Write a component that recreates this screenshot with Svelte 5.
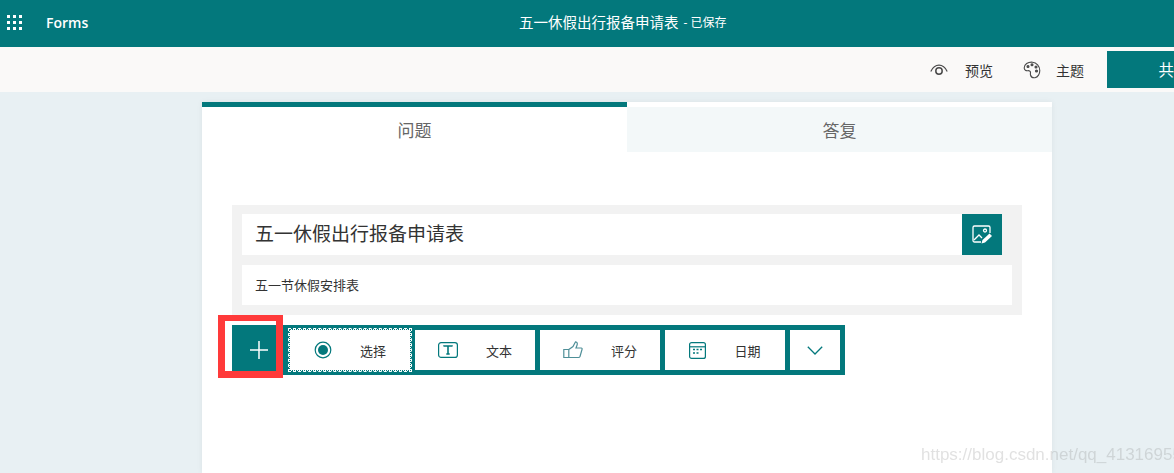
<script>
  const dots = Array(9).fill(0);
</script>

<div class="page">
  <header class="top">
    <div class="waffle">{#each dots as _}<i></i>{/each}</div>
    <span class="brand">Forms</span>
    <div class="doc"><span class="doc-title">五一休假出行报备申请表</span><span class="doc-state">- 已保存</span></div>
  </header>

  <div class="cmdbar">
    <button class="cmd cmd-preview">
      <svg width="18" height="12" viewBox="0 0 18 12" fill="none" stroke="#4a4a4a" stroke-width="1.2"><path d="M.8 7.5C3 3 6 1.2 9 1.2s6 1.8 8.200 6.300"/><circle cx="9" cy="7" r="3.200" stroke-width="1.500"/></svg>
      <span>预览</span>
    </button>
    <button class="cmd cmd-theme">
      <svg width="18" height="18" viewBox="0 0 18 18" fill="none" stroke="#4a4a4a" stroke-width="1.100"><path d="M9.500 1.200C5 .8 1.200 3.300 1.200 7c0 2.200 2 3 3.500 2.700 1.500-.3 2.800.3 2.800 1.700 0 1-.3 1.600 0 2.600.5 1.800 2.500 3 4.500 2.700 3-.5 4.800-4 4.800-7.200 0-4-3.300-8-7.300-8.300z"/><circle cx="5" cy="5.500" r="1" fill="#4a4a4a"/><circle cx="9" cy="3.800" r="1" fill="#4a4a4a"/><circle cx="13" cy="6" r="1" fill="#4a4a4a"/><circle cx="13.500" cy="10" r="1" fill="#4a4a4a"/></svg>
      <span>主题</span>
    </button>
    <button class="share">共享</button>
  </div>

  <main class="card">
    <div class="tabs">
      <div class="tab active">问题</div>
      <div class="tab">答复</div>
    </div>

    <div class="body">
      <section class="titlebox">
        <div class="title-row">
          <div class="title-input">五一休假出行报备申请表</div>
          <button class="img-btn" aria-label="插入图片">
            <svg width="22" height="22" viewBox="0 0 22 22" fill="none" stroke="#fff" stroke-width="1.300">
              <path d="M10 18H3.500A1.500 1.500 0 0 1 2 16.500v-13A1.500 1.500 0 0 1 3.500 2h14A1.500 1.500 0 0 1 19 3.500V9"/>
              <circle cx="14" cy="6.500" r="1.500"/>
              <path d="M3 16l5-5 3 3"/>
              <path d="M10.500 19.500l1-3.500 7-6.500 2.500 2.500-7 6.500z" fill="#fff" stroke="none"/>
            </svg>
          </button>
        </div>
        <div class="sub-input">五一节休假安排表</div>
      </section>

      <div class="adder">
        <button class="plus" aria-label="添加新内容">
          <svg width="18" height="18" viewBox="0 0 18 18" stroke="#fff" stroke-width="1.500"><path d="M9 0v18M0 9h18"/></svg>
        </button>
        <div class="types">
          <button class="type focused">
            <svg class="ico" width="18" height="18" viewBox="0 0 18 18" fill="none"><circle cx="9" cy="9" r="7.800" stroke="#03787c" stroke-width="1.200"/><circle cx="9" cy="9" r="5" fill="#03787c"/></svg>
            <span>选择</span>
          </button>
          <button class="type">
            <svg class="ico" width="20" height="16" viewBox="0 0 20 16" fill="none"><rect x=".6" y=".6" width="18.800" height="14.800" rx="2.500" stroke="#03787c" stroke-width="1.200"/><path d="M6 4.500V4h8v.5M10 4v8M8.300 12h3.400" stroke="#03787c" stroke-width="1.600"/></svg>
            <span>文本</span>
          </button>
          <button class="type">
            <svg class="ico" width="20" height="18" viewBox="0 0 20 18" fill="none" stroke="#4f8f98" stroke-width="1.200"><path d="M.8 8.500h5v8h-5zM5.800 8.500L10 5.500l2.500-4.700c1.800.2 2.200 1.700 1.500 3.500L13 7h5.200c.8 0 1.200.8.800 1.500l-2 7c-.3.700-.8 1-1.500 1H5.800"/></svg>
            <span>评分</span>
          </button>
          <button class="type">
            <svg class="ico" width="17" height="17" viewBox="0 0 17 17" fill="none"><rect x=".6" y=".6" width="15.800" height="15.800" rx="2" stroke="#03787c" stroke-width="1.200"/><path d="M1 4.800h15" stroke="#03787c" stroke-width="1.200"/><path d="M4 7.500h2M7.500 7.500h2M11 7.500h2M4 11h2M7.500 11h2" stroke="#03787c" stroke-width="1.700"/></svg>
            <span>日期</span>
          </button>
          <button class="type more" aria-label="更多">
            <svg width="16" height="9" viewBox="0 0 16 9" fill="none" stroke="#03787c" stroke-width="1.300"><path d="M.8.800L8 8l7.200-7.200"/></svg>
          </button>
        </div>
        <div class="highlight"></div>
      </div>
    </div>
  </main>

  <div class="watermark">https://blog.csdn.net/qq_41316955</div>
</div>

<style>
  :global(body) {
    margin: 0;
    background: #e8f0f3;
  }
  button {
    border: 0;
    padding: 0;
    background: none;
    font: inherit;
    color: inherit;
  }
  .page {
    position: relative;
    width: 1174px;
    height: 473px;
    overflow: hidden;
    background: #e8f0f3;
    font-family: "Open Sans", "Noto Sans CJK SC", sans-serif;
    color: #333;
  }
  .top {
    position: relative;
    display: flex;
    align-items: center;
    height: 47px;
    background: #03787c;
    color: #fff;
  }
  .waffle {
    display: grid;
    grid-template-columns: repeat(3, 3px);
    grid-auto-rows: 3px;
    gap: 3px;
    margin-left: 7px;
    margin-top: -3px;
  }
  .waffle i {
    background: #fff;
  }
  .brand {
    margin-left: 24px;
    margin-top: -3px;
    font-size: 14px;
    font-weight: 600;
  }
  .doc {
    position: absolute;
    left: 519px;
    top: 13px;
    display: flex;
    align-items: center;
    gap: 5px;
    font-size: 14px;
    line-height: 20px;
  }
  .doc-title {
    font-size: 14.500px;
  }
  .doc-state {
    font-size: 12px;
  }
  .cmdbar {
    display: flex;
    align-items: flex-start;
    justify-content: flex-end;
    height: 45px;
    background: #faf9f8;
    padding-top: 4px;
    box-sizing: border-box;
    margin-right: -67px;
  }
  .cmd {
    display: flex;
    align-items: center;
    height: 37px;
    font-size: 14px;
    color: #333;
  }
  .cmd-preview {
    margin-right: 30px;
    gap: 17px;
  }
  .cmd-theme {
    margin-right: 23px;
    gap: 15px;
  }
  .share {
    width: 134px;
    height: 37px;
    background: #03787c;
    color: #fff;
    font-size: 15.500px;
    text-align: center;
  }
  .card {
    width: 850px;
    height: 371px;
    margin: 10px 0 0 202px;
    background: #fff;
    box-shadow: 0 0 6px rgba(0, 0, 0, 0.06);
  }
  .tabs {
    display: flex;
    height: 50px;
  }
  .tab {
    flex: 1;
    display: flex;
    align-items: center;
    justify-content: center;
    margin-top: 5px;
    background: #f3f8f9;
    font-size: 17px;
    color: #666;
  }
  .tab.active {
    margin-top: 0;
    border-top: 5px solid #03787c;
    background: #fff;
  }
  .body {
    padding: 53px 30px 0;
  }
  .titlebox {
    box-sizing: border-box;
    height: 110px;
    padding: 9px 10px 10px;
    background: #f2f2f2;
  }
  .title-row {
    display: flex;
    height: 41px;
    padding-right: 10px;
  }
  .title-input {
    flex: 1;
    padding-left: 13px;
    background: #fff;
    font-size: 19px;
    line-height: 41px;
    color: #333;
  }
  .img-btn {
    display: flex;
    align-items: center;
    justify-content: center;
    width: 40px;
    height: 41px;
    background: #03787c;
  }
  .sub-input {
    height: 40px;
    margin-top: 10px;
    padding-left: 13px;
    background: #fff;
    font-size: 13px;
    line-height: 40px;
    color: #333;
  }
  .adder {
    position: relative;
    display: flex;
    margin-top: 10px;
    height: 50px;
  }
  .plus {
    display: flex;
    align-items: center;
    justify-content: center;
    width: 53px;
    height: 50px;
    background: #03787c;
  }
  .plus svg {
    margin-right: -1px;
  }
  .types {
    display: flex;
    gap: 5px;
    padding: 5px;
    background: #03787c;
  }
  .type {
    position: relative;
    display: flex;
    align-items: center;
    justify-content: center;
    gap: 28px;
    width: 120px;
    height: 40px;
    background: #fff;
    font-size: 13px;
    color: #333;
  }
  .type.focused {
    width: 122px;
    height: 42px;
    margin: -1px -1px -1px -1px;
    outline: 1px dashed #fff;
    outline-offset: 0;
    border: 1px dotted #03787c;
    box-sizing: border-box;
  }
  .type.more {
    width: 50px;
  }
  .highlight {
    position: absolute;
    left: -14px;
    top: -10px;
    width: 65px;
    height: 63px;
    box-sizing: border-box;
    border: solid #ff3a3a;
    border-width: 6px 7px 7px 7px;
    pointer-events: none;
  }
  .watermark {
    position: absolute;
    left: 921px;
    top: 444px;
    font-family: "Liberation Sans", sans-serif;
    font-size: 17px;
    line-height: 22px;
    color: rgba(120, 120, 120, 0.22);
    filter: blur(0.4px);
    white-space: nowrap;
  }
</style>
